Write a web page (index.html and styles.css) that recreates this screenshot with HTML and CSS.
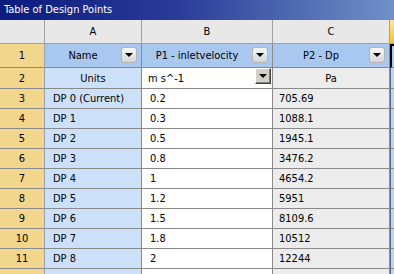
FILE: index.html
```html
<!DOCTYPE html>
<html>
<head>
<meta charset="utf-8">
<link rel="stylesheet" href="styles.css">
</head>
<body>
<div class="panel">
  <div class="title">Table of Design Points</div>
  <div class="grid">
    <div class="c corner"></div>
    <div class="c colhdr">A</div>
    <div class="c colhdr">B</div>
    <div class="c colhdr">C</div>
    <div class="c colhdr sel"></div>

    <div class="c rowhdr r1">1</div>
    <div class="c namecell r1"><span class="lbl">Name</span><span class="btn"><i class="tri"></i></span></div>
    <div class="c namecell r1"><span class="lbl">P1 - inletvelocity</span><span class="btn"><i class="tri"></i></span></div>
    <div class="c namecell r1"><span class="lbl">P2 - Dp</span><span class="btn"><i class="tri"></i></span></div>
    <div class="c extra r1 active"></div>

    <div class="c rowhdr r2">2</div>
    <div class="c acol r2 center">Units</div>
    <div class="c bcol r2 combo"><span>m s^-1</span><span class="cbtn"><i class="tri"></i></span></div>
    <div class="c ccol r2 center">Pa</div>
    <div class="c extra r2"></div>

    <div class="c rowhdr">3</div><div class="c acol">DP 0 (Current)</div><div class="c bcol">0.2</div><div class="c ccol">705.69</div><div class="c extra"></div>
    <div class="c rowhdr">4</div><div class="c acol">DP 1</div><div class="c bcol">0.3</div><div class="c ccol">1088.1</div><div class="c extra"></div>
    <div class="c rowhdr">5</div><div class="c acol">DP 2</div><div class="c bcol">0.5</div><div class="c ccol">1945.1</div><div class="c extra"></div>
    <div class="c rowhdr">6</div><div class="c acol">DP 3</div><div class="c bcol">0.8</div><div class="c ccol">3476.2</div><div class="c extra"></div>
    <div class="c rowhdr">7</div><div class="c acol">DP 4</div><div class="c bcol">1</div><div class="c ccol">4654.2</div><div class="c extra"></div>
    <div class="c rowhdr">8</div><div class="c acol">DP 5</div><div class="c bcol">1.2</div><div class="c ccol">5951</div><div class="c extra"></div>
    <div class="c rowhdr">9</div><div class="c acol">DP 6</div><div class="c bcol">1.5</div><div class="c ccol">8109.6</div><div class="c extra"></div>
    <div class="c rowhdr">10</div><div class="c acol">DP 7</div><div class="c bcol">1.8</div><div class="c ccol">10512</div><div class="c extra"></div>
    <div class="c rowhdr">11</div><div class="c acol">DP 8</div><div class="c bcol">2</div><div class="c ccol">12244</div><div class="c extra"></div>
    <div class="c rowhdr"></div><div class="c acol"></div><div class="c bcol"></div><div class="c ccol"></div><div class="c extra"></div>
  </div>
</div>
</body>
</html>
```
FILE: styles.css
```css
html, body {
  margin: 0;
  padding: 0;
  background: #ffffff;
}
body {
  width: 394px;
  height: 274px;
  overflow: hidden;
  font-family: "DejaVu Sans Condensed", "Liberation Sans", Arial, sans-serif;
  font-size: 11px;
  color: #000;
}
.panel {
  display: flex;
  flex-direction: column;
  width: 394px;
  height: 274px;
  overflow: hidden;
}
.title {
  height: 20px;
  line-height: 19px;
  padding-left: 4px;
  color: #fff;
  font-size: 11px;
  background: linear-gradient(to right, #0a1a7e 0%, #2a3c98 45%, #7090c8 100%);
  box-sizing: border-box;
  flex: none;
}
.grid {
  display: grid;
  grid-template-columns: 45px 97px 131px 117px 10px;
  grid-template-rows: 24px 24px 21px repeat(10, 20px);
}
.c {
  box-sizing: border-box;
  border-right: 1px solid #8a8a8a;
  border-bottom: 1px solid #8a8a8a;
  display: flex;
  align-items: center;
  padding-left: 8px;
  white-space: nowrap;
  overflow: hidden;
}
.corner, .colhdr {
  background: #e8e8e8;
  border-right-color: #a0a0a0;
  border-bottom-color: #a0a0a0;
  justify-content: center;
  padding-left: 0;
}
.colhdr.sel {
  background: linear-gradient(to bottom, #fbe7a0, #f4c040);
  border-right: none;
}
.rowhdr {
  background: #f2d68c;
  justify-content: center;
  padding-left: 0;
  border-right-color: #a0a0a0;
}
.namecell {
  background: #a8c8f0;
  position: relative;
  justify-content: center;
  padding-left: 0;
  padding-right: 20px;
}
.namecell .btn {
  position: absolute;
  right: 4px;
  top: 3px;
  width: 16px;
  height: 16px;
  box-sizing: border-box;
  border: 1px solid #b4b4b4;
  border-radius: 3px;
  background: linear-gradient(to bottom, #f6f6f6, #d6d6d6);
  display: flex;
  align-items: center;
  justify-content: center;
}
.tri {
  display: block;
  width: 0;
  height: 0;
  border-left: 4px solid transparent;
  border-right: 4px solid transparent;
  border-top: 4px solid #000;
}
.acol {
  background: #cce0fa;
}
.bcol {
  background: #ffffff;
}
.ccol {
  background: #ececec;
  padding-left: 6px;
}
.center {
  justify-content: center;
  padding-left: 0;
}
.combo {
  position: relative;
  padding-left: 6px;
  align-items: flex-start;
  padding-top: 4px;
}
.cbtn {
  position: absolute;
  right: 1px;
  top: 0;
  width: 16px;
  height: 16px;
  box-sizing: border-box;
  background: #d4d0c8;
  border-top: 1px solid #ffffff;
  border-left: 1px solid #ffffff;
  border-right: 1px solid #404040;
  border-bottom: 1px solid #404040;
  box-shadow: inset -1px -1px 0 #808080;
  display: flex;
  align-items: center;
  justify-content: center;
}
.extra {
  background: #c2d2ee;
  border-right: none;
  border-left: 1px solid #5a6a90;
  padding-left: 0;
}
.extra.active {
  background: #a8c8f0;
  border-left: 2px solid #000;
  border-top: 2px solid #000;
}
```
